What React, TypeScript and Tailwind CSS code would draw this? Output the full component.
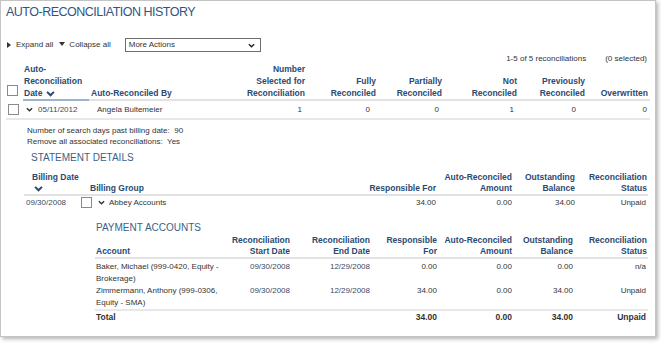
import React from "react";

const H = "text-[#2b4a72] font-bold";

function Box({ className = "" }: { className?: string }) {
  return <span className={`inline-block w-[11px] h-[11px] border border-[#8a8a8a] bg-white ${className}`} />;
}

function Chev({ className = "" }: { className?: string }) {
  return (
    <svg viewBox="0 0 8 5" className={`inline-block w-[7px] h-[5px] ${className}`}>
      <path d="M1 1 L4 4 L7 1" fill="none" stroke="currentColor" strokeWidth="1.6" />
    </svg>
  );
}

function SortArrow({ className = "" }: { className?: string }) {
  return (
    <svg viewBox="0 0 10 7" className={`inline-block w-[9px] h-[6px] ${className}`}>
      <path d="M1 1 L5 5 L9 1" fill="none" stroke="#2b4a72" strokeWidth="2.4" />
    </svg>
  );
}

const mainCols = "grid grid-cols-[17px_66px_152px_66px_71px_66px_76px_67px_63px]";
const stmtCols = "grid grid-cols-[52px_17px_262px_82px_76px_63px_72px]";
const payCols = "grid grid-cols-[136px_60px_80px_67px_75px_61px_74px]";

const accounts = [
  { name: ["Baker, Michael (999-0420, Equity -", "Brokerage)"], start: "09/30/2008", end: "12/29/2008", resp: "0.00", auto: "0.00", out: "0.00", status: "n/a" },
  { name: ["Zimmermann, Anthony (999-0306,", "Equity - SMA)"], start: "09/30/2008", end: "12/29/2008", resp: "34.00", auto: "0.00", out: "34.00", status: "Unpaid" },
];

export default function App() {
  return (
    <div className="w-[661px] h-[344px] bg-white font-['Liberation_Sans',Arial,sans-serif] text-[8px] text-[#333]">
      <div className="w-[656px] h-[337px] border border-[#c4c4c4] shadow-[2px_2px_4px_rgba(0,0,0,0.3)] bg-white pt-[3px]">
        {/* TITLE */}
        <div className="pl-[5px] text-[12.5px] leading-[16px] tracking-[-0.5px] text-[#2f5584]">AUTO-RECONCILIATION HISTORY</div>

        {/* TOOLBAR */}
        <div className="mt-[18px] h-[14px] flex items-center pl-[6px]">
          <svg viewBox="0 0 4 6" className="w-[4px] h-[6px]"><path d="M0 0 L4 3 L0 6Z" fill="#333" /></svg>
          <span className="ml-[5px]">Expand all</span>
          <svg viewBox="0 0 6 4" className="ml-[6px] w-[6px] h-[4px] -mt-[2px]"><path d="M0 0 L6 0 L3 4Z" fill="#333" /></svg>
          <span className="ml-[4px]">Collapse all</span>
          <div className="ml-[14px] w-[136px] h-[14px] border border-[#6d6d6d] flex items-center justify-between pl-[3px] pr-[5px]">
            <span>More Actions</span>
            <svg viewBox="0 0 8 5" className="w-[7px] h-[5px]"><path d="M1 1 L4 4 L7 1" fill="none" stroke="#222" strokeWidth="1.6" /></svg>
          </div>
        </div>

        {/* COUNT */}
        <div className="h-[9px] mt-[2px] flex justify-end items-center leading-[9px] pr-[8px]">
          <span>1-5 of 5 reconciliations</span>
          <span className="ml-[19px]">(0 selected)</span>
        </div>

        {/* MAIN TABLE */}
        <div className="ml-[5px] w-[644px]">
          <div className={`${mainCols} ${H} text-[8.5px] leading-[12px] items-end`}>
            <div className="pb-[2px] pl-[1px]"><Box /></div>
            <div className="pl-[1px] border-b-2 border-[#9fb3cc]">Auto-<br />Reconciliation<br />Date <SortArrow className="ml-[1px]" /></div>
            <div className="pl-[2px] border-b-2 border-[#e2e2e2] self-stretch flex items-end">Auto-Reconciled By</div>
            <div className="text-right pr-[2px] border-b-2 border-[#e2e2e2]">Number<br />Selected for<br />Reconciliation</div>
            <div className="text-right pr-[2px] border-b-2 border-[#e2e2e2] self-stretch flex flex-col justify-end">Fully<br />Reconciled</div>
            <div className="text-right pr-[2px] border-b-2 border-[#e2e2e2] self-stretch flex flex-col justify-end">Partially<br />Reconciled</div>
            <div className="text-right pr-[3px] border-b-2 border-[#e2e2e2] self-stretch flex flex-col justify-end">Not<br />Reconciled</div>
            <div className="text-right pr-[2px] border-b-2 border-[#e2e2e2] self-stretch flex flex-col justify-end">Previously<br />Reconciled</div>
            <div className="text-right pr-[2px] border-b-2 border-[#e2e2e2] self-stretch flex flex-col justify-end">Overwritten</div>
          </div>
          <div className={`${mainCols} h-[19px] items-center border-b-2 border-[#e8e8e8]`}>
            <div className="pl-[2px] flex"><Box /></div>
            <div className="flex items-center pl-[3px]"><Chev className="text-[#333]" /><span className="ml-[5px] text-[#3b4a5e]">05/11/2012</span></div>
            <div className="pl-[8px]">Angela Bultemeier</div>
            <div className="text-right pr-[5px]">1</div>
            <div className="text-right pr-[8px]">0</div>
            <div className="text-right pr-[5px]">0</div>
            <div className="text-right pr-[6px]">1</div>
            <div className="text-right pr-[11px]">0</div>
            <div className="text-right pr-[3px]">0</div>
          </div>
        </div>

        {/* DETAILS */}
        <div className="pl-[26px] pt-[5px] leading-[11px]">
          <div>Number of search days past billing date: &nbsp;90</div>
          <div>Remove all associated reconciliations: &nbsp;Yes</div>
        </div>

        <div className="pl-[30px] mt-[5px] text-[10px] leading-[12px] text-[#3b5f8a]">STATEMENT DETAILS</div>

        {/* STATEMENT TABLE */}
        <div className="ml-[23px] mt-[8px] w-[624px]">
          <div className={`${stmtCols} ${H} text-[8.5px] leading-[11px] items-end border-b-2 border-[#e2e2e2] whitespace-nowrap`}>
            <div className="pl-[8px]">Billing Date<br /><SortArrow className="ml-[2px]" /></div>
            <div className="col-span-2 pl-[14px]">Billing Group</div>
            <div className="text-right pr-[1px]">Responsible For</div>
            <div className="text-right pr-[1px]">Auto-Reconciled<br />Amount</div>
            <div className="text-right pr-[1px]">Outstanding<br />Balance</div>
            <div className="text-right pr-[1px]">Reconciliation<br />Status</div>
          </div>
          <div className={`${stmtCols} h-[13px] items-center`}>
            <div className="pl-[2px] text-[#3b4a5e]">09/30/2008</div>
            <div className="pl-[5px] flex"><Box /></div>
            <div className="flex items-center pl-[5px]"><Chev /><span className="ml-[4px]">Abbey Accounts</span></div>
            <div className="text-right pr-[1px]">34.00</div>
            <div className="text-right pr-[1px]">0.00</div>
            <div className="text-right pr-[1px]">34.00</div>
            <div className="text-right pr-[2px]">Unpaid</div>
          </div>
        </div>

        <div className="pl-[95px] mt-[13px] text-[10px] leading-[12px] text-[#3b5f8a]">PAYMENT ACCOUNTS</div>

        {/* PAYMENT TABLE */}
        <div className="ml-[94px] mt-[1px] w-[553px]">
          <div className={`${payCols} ${H} text-[8.5px] leading-[11px] items-end border-b-2 border-[#e2e2e2] whitespace-nowrap`}>
            <div className="pl-[1px]">Account</div>
            <div className="text-right pr-[1px]">Reconciliation<br />Start Date</div>
            <div className="text-right pr-[1px]">Reconciliation<br />End Date</div>
            <div className="text-right pr-[1px]">Responsible<br />For</div>
            <div className="text-right pr-[1px]">Auto-Reconciled<br />Amount</div>
            <div className="text-right pr-[1px]">Outstanding<br />Balance</div>
            <div className="text-right pr-[1px]">Reconciliation<br />Status</div>
          </div>
          <div className="pt-[2px] border-b-2 border-[#e8e8e8]">
            {accounts.map((a) => (
              <div key={a.start + a.name[0]} className={`${payCols} leading-[12px] h-[24px]`}>
                <div className="pl-[1px]">{a.name[0]}<br />{a.name[1]}</div>
                <div className="text-right pr-[1px] text-[#3b4a5e]">{a.start}</div>
                <div className="text-right pr-[1px] text-[#3b4a5e]">{a.end}</div>
                <div className="text-right pr-[1px]">{a.resp}</div>
                <div className="text-right pr-[1px]">{a.auto}</div>
                <div className="text-right pr-[1px]">{a.out}</div>
                <div className="text-right pr-[2px]">{a.status}</div>
              </div>
            ))}
          </div>
          <div className={`${payCols} h-[12px] items-center font-bold text-[8.5px]`}>
            <div className="pl-[1px]">Total</div>
            <div />
            <div />
            <div className="text-right pr-[1px]">34.00</div>
            <div className="text-right pr-[1px]">0.00</div>
            <div className="text-right pr-[1px]">34.00</div>
            <div className="text-right pr-[2px]">Unpaid</div>
          </div>
        </div>
      </div>
    </div>
  );
}
